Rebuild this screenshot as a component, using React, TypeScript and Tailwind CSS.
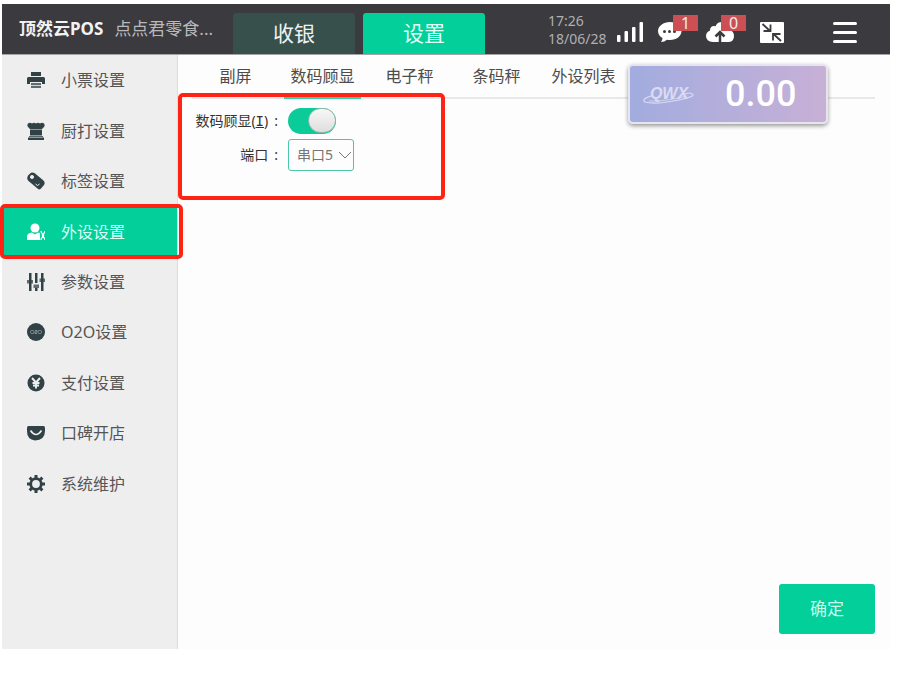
import { useState, type ReactNode } from 'react';

const icon = 'h-[18px] w-[18px] shrink-0';

const PrinterIcon = () => (
  <svg viewBox="0 0 18 18" className={icon} fill="currentColor" aria-hidden="true">
    <path d="M4 1h10v4H4zM1.500 6h15Q18 6 18 7.500V13h-3v-2H3v2H0V7.500Q0 6 1.500 6z" />
    <path d="M4 12h10v5H4z" opacity="0.75" />
    <path d="M4 14.500h10" stroke="#eee" strokeWidth="0.800" />
  </svg>
);

const KitchenIcon = () => (
  <svg viewBox="0 0 18 18" className={icon} fill="currentColor" aria-hidden="true">
    <path d="M1 1.500Q3 0 5 1.500Q7 0 9 1.500Q11 0 13 1.500Q15 0 17 1.500Q18.500 4 16.500 5.500L15 7H3L1.500 5.500Q-.500 4 1 1.500z" />
    <path d="M3 7.500h12v6H3zM1 15.500h16V18H1z" />
    <path d="M2 14.500h14" stroke="currentColor" strokeWidth="0.800" />
  </svg>
);

const TagIcon = () => (
  <svg viewBox="0 0 18 18" className={icon} fill="currentColor" aria-hidden="true">
    <path
      fillRule="evenodd"
      d="M1 3.500L4 .700Q5.500 0 7.500 1L16.500 8.500Q18.500 10.500 17 13L13.500 17Q12 18 10.500 16.500L1.500 9Q0 7.500 .300 5.500zM5 3a2 2 0 1 0 .010 0z"
    />
    <path d="M8.500 12l2 1.500 2-1.500" stroke="#eee" fill="none" />
  </svg>
);

const PeripheralIcon = () => (
  <svg viewBox="0 0 18 18" className={icon} fill="currentColor" aria-hidden="true">
    <circle cx="8" cy="5" r="4.500" />
    <path d="M0 17V13.500q0-2.500 3-3.500l2-.500 3 2 3-2 2 .500v7z" />
    <path d="M14 8q0 2 1.500 2.500v4Q14 15 14 17M18 8q0 2-1.500 2.500v4Q18 15 18 17" stroke="currentColor" fill="none" strokeWidth="1.300" />
  </svg>
);

const SlidersIcon = () => (
  <svg viewBox="0 0 18 18" className={icon} fill="currentColor" aria-hidden="true">
    <path d="M2 0h2.500v18H2zM8 0h2.500v10H8zM8 15h2.500v3H8zM14 0h2.500v18H14z" />
    <path d="M0 7h6v3.500H0zM6.500 11.500h5.500V15H6.500zM12.500 5.500H18V9h-5.500z" opacity="0.75" />
  </svg>
);

const O2OIcon = () => (
  <svg viewBox="0 0 18 18" className={icon} aria-hidden="true">
    <circle cx="9" cy="9" r="9" fill="currentColor" />
    <g fill="none" stroke="#8b9899" strokeWidth="0.900">
      <rect x="3.500" y="7.500" width="3.500" height="3" rx="1.200" />
      <path d="M8 7.500h2v1.500H8v1.500h2" />
      <rect x="11" y="7.500" width="3.500" height="3" rx="1.200" />
    </g>
  </svg>
);

const PayIcon = () => (
  <svg viewBox="0 0 18 18" className={icon} aria-hidden="true">
    <circle cx="9" cy="9" r="8.500" fill="currentColor" />
    <path d="M5 4l4 4.500L13 4M9 8v6.500M5.500 9h7M6 11.500h6" stroke="#eee" strokeWidth="1.900" fill="none" />
  </svg>
);

const KoubeiIcon = () => (
  <svg viewBox="0 0 18 18" className={icon} aria-hidden="true">
    <path d="M1.500 2h15Q18 2 18 4v3q0 9-10 9.500Q0 15.500 0 7V4q0-2 1.500-2z" fill="currentColor" />
    <path d="M3.500 6.500q5.500 8 11 0" stroke="#eee" strokeWidth="1.600" fill="none" />
  </svg>
);

const GearIcon = () => (
  <svg viewBox="0 0 18 18" className={icon} aria-hidden="true">
    <circle cx="9" cy="9" r="5.300" fill="none" stroke="currentColor" strokeWidth="2.800" />
    <g stroke="currentColor" strokeWidth="3">
      <path d="M9 0v3M9 15v3M0 9h3M15 9h3M2.600 2.600l2.200 2.200M13.200 13.200l2.200 2.200M2.600 15.400l2.200-2.200M13.200 4.800l2.200-2.200" />
    </g>
  </svg>
);

const menu: { label: string; icon: ReactNode }[] = [
  { label: '小票设置', icon: <PrinterIcon /> },
  { label: '厨打设置', icon: <KitchenIcon /> },
  { label: '标签设置', icon: <TagIcon /> },
  { label: '外设设置', icon: <PeripheralIcon /> },
  { label: '参数设置', icon: <SlidersIcon /> },
  { label: 'O2O设置', icon: <O2OIcon /> },
  { label: '支付设置', icon: <PayIcon /> },
  { label: '口碑开店', icon: <KoubeiIcon /> },
  { label: '系统维护', icon: <GearIcon /> },
];

const tabs = ['副屏', '数码顾显', '电子秤', '条码秤', '外设列表'];

function Badge({ children }: { children: ReactNode }) {
  return (
    <span className="absolute -top-[7px] left-[15px] flex h-4 w-[25px] items-center justify-center bg-[#cb4f53] text-base leading-4 text-[#eee]">
      {children}
    </span>
  );
}

function Header() {
  return (
    <header className="flex h-[51px] items-stretch border-b border-[#a5a5a7] bg-[#3a3a3f]">
      <div className="flex w-[231px] shrink-0 items-center gap-[11px] pl-[17px] whitespace-nowrap text-[17px]">
        <strong className="font-bold text-[#f2f2f2]">顶然云POS</strong>
        <span className="text-[#b9b9bb]">点点君零食...</span>
      </div>
      <nav className="flex shrink-0 items-end gap-2 text-[21px]">
        <button type="button" className="h-[41px] w-[122px] rounded-t-[3px] bg-[#37504c] text-[#f0f0f0]">
          收银
        </button>
        <button type="button" className="h-[41px] w-[122px] rounded-t-[3px] bg-[#02cf99] text-[#e4fff6]">
          设置
        </button>
      </nav>
      <div className="ml-auto flex shrink-0 items-center pt-[6px] pr-[33px] text-white">
        <time className="mb-1 w-[69px] text-sm leading-[18px] text-[#b0b0b2]">
          17:26
          <br />
          18/06/28
        </time>
        <svg viewBox="0 0 26 20" className="mr-[15px] h-5 w-[26px]" fill="currentColor" role="img" aria-label="信号">
          <rect x="0" y="13" width="3.500" height="7" rx="1" />
          <rect x="7.500" y="9" width="3.500" height="11" rx="1" />
          <rect x="15" y="5" width="3.500" height="15" rx="1" />
          <rect x="22.500" y="0" width="3.500" height="20" rx="1" />
        </svg>
        <button type="button" aria-label="消息" className="relative mr-6 h-5 w-6">
          <svg viewBox="0 0 24 20" className="h-5 w-6" aria-hidden="true">
            <path d="M12 0c6.600 0 11.500 4 11.500 9S18.600 18 12 18q-1.500 0-3-.300Q6.500 20 3 20q1.500-2 1.500-4Q0 13.500 0 9C0 4 5.400 0 12 0z" fill="currentColor" />
            <g fill="#3a3a3f">
              <circle cx="6.500" cy="9.500" r="1.500" />
              <circle cx="11.500" cy="9.500" r="1.500" />
              <circle cx="16.500" cy="9.500" r="1.500" />
            </g>
          </svg>
          <Badge>1</Badge>
        </button>
        <button type="button" aria-label="上传" className="relative mr-[26px] h-5 w-7">
          <svg viewBox="0 0 28 20" className="h-5 w-7" aria-hidden="true">
            <path d="M7 20q-7-.500-7-6 0-4 4-5.500Q4 4 8 4q1 0 1.500.300Q11 0 16 0q7 0 8 8 4 1.500 4 6 0 5.500-5 6z" fill="currentColor" />
            <path d="M14 20v-8M9.500 14.500L14 10l4.500 4.500" fill="none" stroke="#3a3a3f" strokeWidth="2.500" />
          </svg>
          <Badge>0</Badge>
        </button>
        <button type="button" aria-label="缩小窗口" className="mr-[49px] h-[21px] w-6">
          <svg viewBox="0 0 24 21" className="h-[21px] w-6" aria-hidden="true">
            <rect width="24" height="21" rx="1" fill="currentColor" />
            <path d="M2.500 2l7.500 7M10.500 2.500V9H3.500M21 19l-7.500-7M13 18.500V12h7.500" fill="none" stroke="#3a3a3f" strokeWidth="1.800" />
          </svg>
        </button>
        <button type="button" aria-label="菜单" className="flex w-6 flex-col gap-[6px]">
          <span className="h-[3px] rounded-sm bg-white" />
          <span className="h-[3px] rounded-sm bg-white" />
          <span className="h-[3px] rounded-sm bg-white" />
        </button>
      </div>
    </header>
  );
}

function Sidebar() {
  return (
    <aside className="w-[176px] shrink-0 border-r border-[#dcdcdc] bg-[#efeeef]">
      <ul className="grid h-[454px] auto-rows-fr">
        {menu.map((item, i) => (
          <li key={item.label} className="relative">
            <button
              type="button"
              className={
                i === 3
                  ? 'flex h-full w-full items-center gap-4 bg-[#02cf99] pl-[25px] text-base text-[#dcfff4]'
                  : 'flex h-full w-full items-center gap-4 pl-[25px] text-base text-[#555]'
              }
            >
              <span className={i === 3 ? 'text-white' : 'text-[#304246]'}>{item.icon}</span>
              {item.label}
            </button>
            {i === 3 && (
              <span className="pointer-events-none absolute -inset-y-[2px] -left-[2px] z-10 w-[183px] rounded-[5px] border-4 border-[#ff2314]" />
            )}
          </li>
        ))}
      </ul>
    </aside>
  );
}

function CustomerDisplay() {
  return (
    <div className="absolute top-[9px] right-[62px] flex h-[60px] w-[200px] items-center rounded-[5px] border-2 border-[#e6e4ec] bg-linear-to-r from-[#a2acdf] to-[#c7b0d6] pl-[13px] shadow-[0_2px_4px_rgba(0,0,0,0.4)]">
      <div className="relative flex h-6 w-[52px] items-center justify-center text-[#d9dcf3]">
        <span className="font-['Liberation_Sans'] text-base leading-4 font-bold italic">QWX</span>
        <svg viewBox="0 0 52 24" className="absolute inset-0" fill="none" stroke="currentColor" aria-hidden="true">
          <path d="M8 14Q-2 17 2 20Q12 23 36 18Q54 14 49 12Q47 10 42 12" strokeWidth="1.200" />
          <path d="M6 19Q20 20 44 14" strokeWidth="0.800" />
        </svg>
      </div>
      <output className="ml-[30px] font-['Roboto'] text-[36px] leading-9 font-medium text-white">0.00</output>
    </div>
  );
}

export default function App() {
  const [enabled, setEnabled] = useState(true);
  return (
    <div className="flex min-h-screen flex-col bg-white pt-1 pr-8 pb-[27px] pl-[2px] font-['Noto_Sans','Noto_Sans_CJK_SC',sans-serif]">
      <Header />
      <div className="flex flex-1">
        <Sidebar />
        <main className="relative flex min-w-0 flex-1 flex-col bg-[#fdfdfd]">
          <nav className="mr-[15px] ml-[14px] border-b-2 border-[#e8e8ea]">
            <div className="-mb-[2px] flex">
              {tabs.map((tab, i) => (
                <button key={tab} type="button" className="w-[87px] px-[5px] text-base whitespace-nowrap text-[#4c4c4c]">
                  <span
                    className={
                      i === 1
                        ? 'flex h-11 items-center justify-center border-b-2 border-[#32d2a8]'
                        : 'flex h-11 items-center justify-center border-b-2 border-transparent'
                    }
                  >
                    {tab}
                  </span>
                </button>
              ))}
            </div>
          </nav>
          <CustomerDisplay />
          <form className="flex flex-1 flex-col" onSubmit={(e) => e.preventDefault()}>
            <div className="relative grid w-[267px] grid-cols-[100px_auto] items-center justify-start gap-x-[10px] gap-y-[5px] pt-[9px] pb-[29px] text-sm text-[#333]">
              <label htmlFor="display" className="flex items-center justify-end gap-[6px] whitespace-nowrap">
                <span>
                  数码顾显(<u className="font-['DejaVu_Sans_Mono']">I</u>)
                </span>
                <span>:</span>
              </label>
              <label className="relative block h-[26px] w-12">
                <input
                  id="display"
                  type="checkbox"
                  role="switch"
                  checked={enabled}
                  onChange={(e) => setEnabled(e.target.checked)}
                  className="peer block h-[26px] w-12 appearance-none rounded-full bg-[#bbb] checked:bg-[#0bcb98]"
                />
                <span className="pointer-events-none absolute top-0 left-0 h-[25px] w-7 rounded-full border border-[#9fb5ae] bg-linear-to-b from-[#f8f8f8] to-[#dedede] peer-checked:left-5" />
              </label>
              <label htmlFor="port" className="flex items-center justify-end gap-[6px]">
                <span>端口</span>
                <span>:</span>
              </label>
              <div className="relative">
                <select
                  id="port"
                  className="block h-8 w-[66px] appearance-none rounded-[3px] border border-[#4cc7a6] bg-transparent pl-2 text-sm text-[#777]"
                >
                  <option>串口5</option>
                </select>
                <svg viewBox="0 0 14 8" className="pointer-events-none absolute top-3 right-[2px] h-2 w-[14px]" fill="none" stroke="#777" aria-hidden="true">
                  <path d="M1 1l6 6 6-6" />
                </svg>
              </div>
              <span className="pointer-events-none absolute inset-x-0 -top-[6px] bottom-0 rounded-[5px] border-4 border-[#ff2314]" />
            </div>
            <button type="submit" className="mt-auto mr-[15px] mb-[15px] h-[50px] w-24 self-end rounded-[3px] bg-[#02cf99] text-[17px] text-[#c9fbeb]">
              确定
            </button>
          </form>
        </main>
      </div>
    </div>
  );
}
